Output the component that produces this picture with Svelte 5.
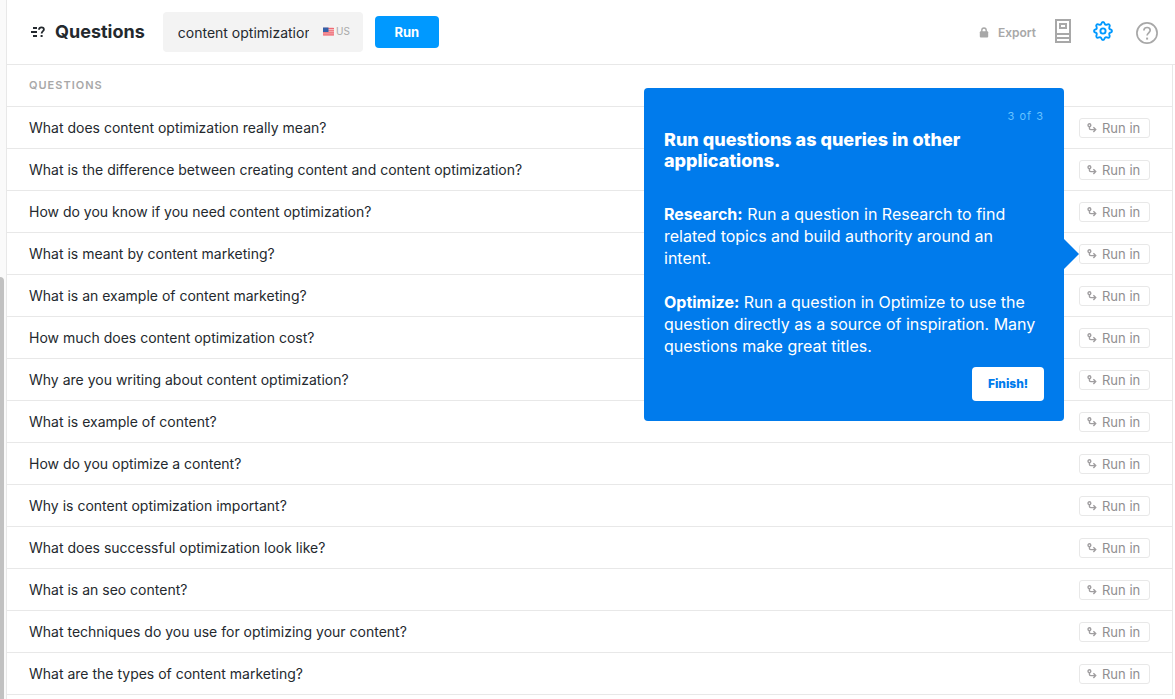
<script>
  const questions = [
    'What does content optimization really mean?',
    'What is the difference between creating content and content optimization?',
    'How do you know if you need content optimization?',
    'What is meant by content marketing?',
    'What is an example of content marketing?',
    'How much does content optimization cost?',
    'Why are you writing about content optimization?',
    'What is example of content?',
    'How do you optimize a content?',
    'Why is content optimization important?',
    'What does successful optimization look like?',
    'What is an seo content?',
    'What techniques do you use for optimizing your content?',
    'What are the types of content marketing?'
  ];
  const tourRow = 3;
  let query = $state('content optimization');
  let tourOpen = $state(true);
</script>

<div class="app">
  <div class="rail"><div class="thumb"></div></div>
  <div class="panel">
    <header>
      <svg class="logo" width="15" height="12" viewBox="0 0 15 12" aria-hidden="true">
        <path d="M3 2h4M1 6h6M3 10h4" fill="none" stroke="#24292e" stroke-width="2" />
        <path d="M9 3.800C9 2.100 10 1.400 11.400 1.400S13.900 2.200 13.900 3.500C13.900 5.200 11.600 5.200 11.600 7.600" fill="none" stroke="#24292e" stroke-width="1.800" />
        <rect x="10.600" y="9" width="2" height="2" fill="#24292e" />
      </svg>
      <h1>Questions</h1>
      <div class="search">
        <input type="text" aria-label="Query" bind:value={query} />
        <button class="locale" aria-label="Locale US">
          <svg width="11" height="9" viewBox="0 0 11 9" aria-hidden="true">
            <rect width="11" height="8" y=".5" rx="1" fill="#f6b9bd" />
            <path d="M0 1.500h11M0 3.700h11M0 5.900h11M0 7.900h11" stroke="#ee6a74" stroke-width="1.100" />
            <rect y=".5" width="5.500" height="4.500" fill="#3460a8" />
          </svg>
          <span>US</span>
        </button>
      </div>
      <button class="run">Run</button>
      <div class="tools">
        <button class="export">
          <svg width="10" height="11" viewBox="0 0 10 11" aria-hidden="true">
            <rect x=".8" y="4.300" width="8.400" height="6.200" rx="1" fill="#a8a8a8" />
            <path d="M2.800 5V3.200a2.200 2.200 0 0 1 4.400 0V5" fill="none" stroke="#a8a8a8" stroke-width="1.400" />
          </svg>
          <span>Export</span>
        </button>
        <button class="icon" aria-label="Guide">
          <svg width="16" height="24" viewBox="0 0 16 24" fill="none" stroke="#a8a8a8" stroke-width="2">
            <path d="M1 1h14v22H1zM1 15h14M1 19h14" />
            <path d="M5 5h6v4H5z" />
          </svg>
        </button>
        <button class="icon gear" aria-label="Settings">
          <svg width="20" height="20" viewBox="0 0 20 20" fill="none" stroke="#0099ff" stroke-width="1.900" stroke-linejoin="round">
            <path d="M8.300 2.900Q8.700 1 10 1T11.700 2.900Q12.300 4.200 13.800 3.700Q15.500 2.700 16.400 3.600T16.300 6.200Q15.800 7.700 17.100 8.300Q19 8.700 19 10T17.100 11.700Q15.800 12.300 16.300 13.800Q17.300 15.500 16.400 16.400T13.800 16.300Q12.300 15.800 11.700 17.100Q11.300 19 10 19T8.300 17.100Q7.700 15.800 6.200 16.300Q4.500 17.300 3.600 16.400T3.700 13.800Q4.200 12.300 2.900 11.700Q1 11.300 1 10T2.900 8.300Q4.200 7.700 3.700 6.200Q2.700 4.500 3.600 3.600T6.200 3.700Q7.700 4.200 8.300 2.900Z" />
            <circle cx="10" cy="10" r="2.600" />
          </svg>
        </button>
        <button class="icon help" aria-label="Help">
          <svg width="22" height="22" viewBox="0 0 22 22" fill="none" stroke="#a8a8a8">
            <circle cx="11" cy="11" r="10.100" stroke-width="1.700" />
            <path d="M7.900 8.600C7.900 6.500 9.300 5.500 11.100 5.500s3.100 1.100 3.100 2.800c0 2.500-3.100 2.500-3.100 5.300" stroke-width="1.700" />
            <path d="M10.100 16.600h2" stroke-width="2" />
          </svg>
        </button>
      </div>
    </header>

    <main>
      <table>
        <thead>
          <tr><th scope="col" colspan="2">QUESTIONS</th></tr>
        </thead>
        <tbody>
          {#each questions as question, i}
            <tr>
              <td>{question}</td>
              <td class="action">
                <div class="anchor">
                  <button class="run-in">
                    <svg width="10" height="10" viewBox="0 0 10 10" fill="none" stroke="#a09ea0" stroke-width="1.400" aria-hidden="true">
                      <circle cx="2.400" cy="2.200" r="1.400" />
                      <path d="M2.400 3.600v1.600Q2.400 6.600 3.800 6.600H8.600M6.400 4.200l2.300 2.400L6.400 9" />
                    </svg>
                    <span>Run in</span>
                  </button>
                  {#if i === tourRow && tourOpen}
                    <section class="tour" aria-label="Tour">
                      <div class="step">3 of 3</div>
                      <h2>Run questions as queries in other applications.</h2>
                      <p><strong>Research:</strong> Run a question in Research to find related topics and build authority around an intent.</p>
                      <p><strong>Optimize:</strong> Run a question in Optimize to use the question directly as a source of inspiration. Many questions make great titles.</p>
                      <button class="finish" onclick={() => (tourOpen = false)}>Finish!</button>
                    </section>
                  {/if}
                </div>
              </td>
            </tr>
          {/each}
        </tbody>
      </table>
    </main>
  </div>
</div>

<style>
  :global(body) {
    background: #fff;
  }
  .app {
    display: flex;
    height: 100vh;
    overflow: hidden;
    font-family: Inter, 'Liberation Sans', sans-serif;
    color: #24292e;
  }
  button,
  input {
    font-family: inherit;
    color: inherit;
    border: 0;
    padding: 0;
    background: none;
  }
  button {
    cursor: pointer;
  }
  svg {
    display: block;
    flex: none;
  }
  .rail {
    flex: none;
    display: flex;
    width: 6px;
    background: #fafafa;
    border-right: 1px solid #e8e8e8;
  }
  .thumb {
    width: 4px;
    margin-top: 277px;
    background: #c1c1c1;
    border-radius: 0 4px 0 0;
  }
  .panel {
    flex: 1;
    min-width: 0;
  }
  header {
    display: flex;
    align-items: center;
    height: 64px;
    padding: 0 17px 0 23px;
    border-bottom: 1px solid #e8e8e8;
  }
  h1 {
    margin: 0 18px 0 10px;
    font-size: 18px;
    line-height: 24px;
    font-weight: 700;
  }
  .search {
    display: flex;
    align-items: center;
    box-sizing: border-box;
    width: 200px;
    height: 40px;
    padding: 0 13px 0 15px;
    border-radius: 4px;
    background: #f3f3f3;
  }
  .search input {
    flex: 1;
    min-width: 0;
    height: 24px;
    font-size: 14px;
    outline: 0;
  }
  .locale {
    display: flex;
    align-items: center;
    gap: 2px;
    margin-left: 14px;
    padding-bottom: 2px;
    font-size: 10px;
    color: #a8a8a8;
  }
  .run {
    width: 64px;
    height: 32px;
    margin-left: 12px;
    border-radius: 4px;
    background: #0099ff;
    color: #fff;
    font-size: 13px;
    font-weight: 700;
  }
  .tools {
    display: flex;
    align-items: center;
    margin-left: auto;
  }
  .export {
    display: flex;
    align-items: center;
    gap: 9px;
    margin-right: 19px;
    font-size: 12px;
    font-weight: 600;
    color: #a8a8a8;
  }
  .icon {
    padding-bottom: 2px;
  }
  .gear {
    margin-left: 22px;
  }
  .help {
    margin-left: 23px;
    padding: 2px 0 0;
  }
  main {
    margin-right: 2px;
    border-right: 1px solid #e8e8e8;
  }
  table {
    width: 100%;
    border-collapse: separate;
    border-spacing: 0;
  }
  th,
  td {
    box-sizing: border-box;
    height: 42px;
    padding: 0 22px;
    border-bottom: 1px solid #e8e8e8;
    text-align: left;
    font-size: 14px;
    line-height: 20px;
  }
  th {
    padding-bottom: 2px;
    font-size: 11px;
    font-weight: 600;
    letter-spacing: 1px;
    color: #a8a8a8;
  }
  td.action {
    width: 71px;
    padding-left: 0;
  }
  .anchor {
    position: relative;
  }
  .run-in {
    display: flex;
    align-items: center;
    gap: 5px;
    box-sizing: border-box;
    width: 71px;
    height: 20px;
    padding-left: 7px;
    border: 1px solid #e8e8e8;
    border-radius: 3px;
    background: #fff;
    color: #908e90;
    font-size: 13px;
  }
  .tour {
    position: absolute;
    top: -156px;
    right: calc(100% + 15px);
    box-sizing: border-box;
    width: 420px;
    padding: 20px;
    border-radius: 4px;
    background: #007bec;
    color: #fff;
    text-align: left;
  }
  .tour::after {
    content: '';
    position: absolute;
    top: 151px;
    left: 100%;
    border: 15px solid transparent;
    border-right: 0;
    border-left-color: #007bec;
  }
  .step {
    margin-bottom: 5px;
    font-size: 11px;
    line-height: 16px;
    letter-spacing: 1px;
    text-align: right;
    color: #66c2ff;
  }
  h2 {
    margin: 0 0 32px;
    font-size: 18px;
    line-height: 21px;
    font-weight: 800;
  }
  p {
    margin: 0 0 22px;
    padding-right: 4px;
    font-size: 16px;
    line-height: 22px;
    font-weight: 400;
  }
  strong {
    font-weight: 700;
  }
  .finish {
    display: block;
    width: 72px;
    height: 34px;
    margin: -12px 0 0 auto;
    border-radius: 4px;
    background: #fff;
    color: #007bec;
    font-size: 12px;
    font-weight: 800;
  }
</style>
